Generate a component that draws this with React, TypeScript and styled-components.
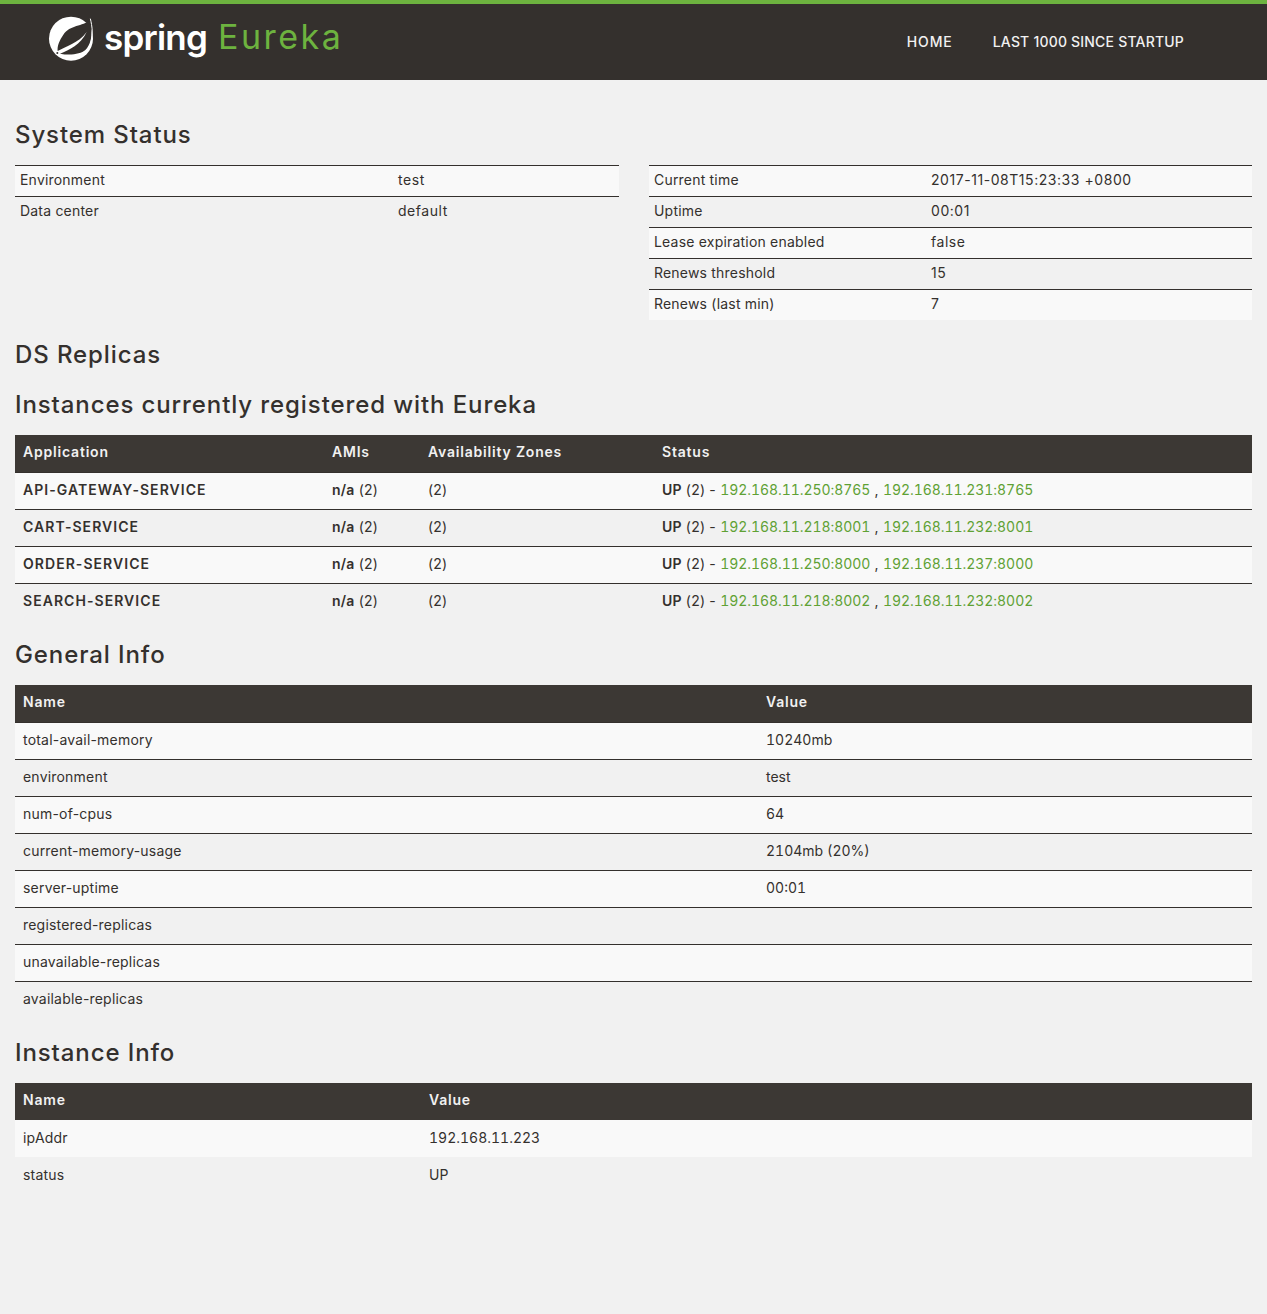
import React from 'react'
import styled, { createGlobalStyle } from 'styled-components'

const bodyFont = `'Inter', 'Open Sans', sans-serif`

const GlobalStyle = createGlobalStyle`
  html, body {
    margin: 0;
    padding: 0;
    background: #f1f1f1;
    color: #34302d;
    font-family: ${bodyFont};
  }
`

const Page = styled.div`
  min-height: 1314px;
  background: #f1f1f1;
`

const Navbar = styled.header`
  height: 76px;
  border-top: 4px solid #6db33f;
  background: #34302d;
  display: flex;
  align-items: flex-start;
  justify-content: space-between;
`

const Brand = styled.div`
  display: flex;
  align-items: flex-start;
  margin: 11px 0 0 48px;
`

const BrandSpring = styled.span`
  font-weight: 600;
  font-size: 35px;
  line-height: 46px;
  letter-spacing: -0.8px;
  color: #fff;
  margin: -1px 0 0 10px;
`

const BrandEureka = styled.span`
  font-weight: 400;
  font-size: 34px;
  line-height: 46px;
  letter-spacing: 2.5px;
  color: #6db33f;
  margin: -1px 0 0 11px;
`

const NavLinks = styled.nav`
  display: flex;
  gap: 40px;
  margin: 30px 83px 0 0;
`

const NavLink = styled.a<{ $spacing: number }>`
  font-size: 14px;
  font-weight: 500;
  line-height: 16px;
  letter-spacing: ${({ $spacing }) => $spacing}px;
  color: #f1f1f1;
`

const Container = styled.main`
  padding: 0 15px;
`

const Heading = styled.h2<{ $top: number; $bottom?: number }>`
  margin: 0;
  padding: ${({ $top, $bottom = 15 }) => `${$top}px 0 ${$bottom}px`};
  font-size: 24px;
  font-weight: 500;
  line-height: 30px;
  letter-spacing: 0.9px;
  color: #34302d;
`

const StatusRow = styled.div`
  display: grid;
  grid-template-columns: 604px 603px;
  column-gap: 30px;
  align-items: start;
`

const Table = styled.table`
  width: 100%;
  border-collapse: collapse;
  table-layout: fixed;
`

const HeadCell = styled.th<{ $plain?: boolean }>`
  height: 33px;
  padding: 0 8px 4px;
  text-align: left;
  background: #3c3834;
  border-bottom: ${({ $plain }) => ($plain ? 'none' : '1px solid #34302d')};
  color: #f1f1f1;
  font-size: 14px;
  font-weight: 600;
  letter-spacing: 0.8px;
`

const Row = styled.tr<{ $striped: boolean }>`
  background: ${({ $striped }) => ($striped ? '#f9f9f9' : 'transparent')};
`

const Cell = styled.td<{ $plain?: boolean }>`
  height: 33px;
  padding: ${({ $plain }) => ($plain ? '1px 8px 3px' : '0 8px 3px')};
  border-top: ${({ $plain }) => ($plain ? 'none' : '1px solid #34302d')};
  font-size: 14px;
  letter-spacing: 0.2px;
  color: #34302d;
  white-space: nowrap;
  tr:first-child > & {
    border-top: none;
  }
`

const StatusCell = styled.td`
  height: 27px;
  padding: 0 5px 3px;
  border-top: 1px solid #34302d;
  font-size: 14px;
  letter-spacing: 0.2px;
  color: #34302d;
  white-space: nowrap;
`

const StatusValue = styled.span`
  letter-spacing: 0.55px;
`

const AppName = styled.b`
  font-weight: 600;
  letter-spacing: 1.05px;
`

const Strong = styled.b`
  font-weight: 600;
`

const Numeric = styled.span`
  font-variant-numeric: tabular-nums;
  letter-spacing: 0;
`

const InstanceLink = styled.a`
  color: #5fa134;
  font-variant-numeric: tabular-nums;
  letter-spacing: -0.05px;
`

const SpringLeaf = () => (
  <svg width="46" height="46" viewBox="24 21 138 138" aria-hidden="true">
    <circle cx="93" cy="92" r="66" fill="#fff" />
    <path
      fill="#34302d"
      d="M150 36 C128 56 90 50 70 80 C58 97 51 115 53 129 C76 116 115 106 140 72 C122 110 88 126 60 137 C92 143 122 138 136 126 C150 112 156 90 154 66 C154 54 152 46 150 36 Z"
    />
    <path
      fill="none"
      stroke="#fff"
      strokeWidth="3"
      d="M151 32 C156 52 163 90 146 118"
    />
    <circle cx="52" cy="135" r="3" fill="#34302d" />
  </svg>
)

const leftStatus = [
  ['Environment', 'test'],
  ['Data center', 'default'],
]

const rightStatus = [
  ['Current time', '2017-11-08T15:23:33 +0800'],
  ['Uptime', '00:01'],
  ['Lease expiration enabled', 'false'],
  ['Renews threshold', '15'],
  ['Renews (last min)', '7'],
]

const apps = [
  ['API-GATEWAY-SERVICE', '192.168.11.250:8765', '192.168.11.231:8765'],
  ['CART-SERVICE', '192.168.11.218:8001', '192.168.11.232:8001'],
  ['ORDER-SERVICE', '192.168.11.250:8000', '192.168.11.237:8000'],
  ['SEARCH-SERVICE', '192.168.11.218:8002', '192.168.11.232:8002'],
]

const generalInfo = [
  ['total-avail-memory', '10240mb'],
  ['environment', 'test'],
  ['num-of-cpus', '64'],
  ['current-memory-usage', '2104mb (20%)'],
  ['server-uptime', '00:01'],
  ['registered-replicas', ''],
  ['unavailable-replicas', ''],
  ['available-replicas', ''],
]

const instanceInfo = [
  ['ipAddr', '192.168.11.223'],
  ['status', 'UP'],
]

function StatusTable({ rows, labelWidth }: { rows: string[][]; labelWidth: number }) {
  return (
    <Table>
      <colgroup>
        <col style={{ width: labelWidth }} />
        <col />
      </colgroup>
      <tbody>
        {rows.map(([name, value], i) => (
          <Row key={name} $striped={i % 2 === 0}>
            <StatusCell>{name}</StatusCell>
            <StatusCell>
              <StatusValue>{value}</StatusValue>
            </StatusCell>
          </Row>
        ))}
      </tbody>
    </Table>
  )
}

function InfoTable({ rows, nameWidth, plain }: { rows: string[][]; nameWidth: number; plain?: boolean }) {
  return (
    <Table>
      <colgroup>
        <col style={{ width: nameWidth }} />
        <col />
      </colgroup>
      <thead>
        <tr>
          <HeadCell $plain={plain}>Name</HeadCell>
          <HeadCell $plain={plain}>Value</HeadCell>
        </tr>
      </thead>
      <tbody>
        {rows.map(([name, value], i) => (
          <Row key={name} $striped={i % 2 === 0}>
            <Cell $plain={plain}>{name}</Cell>
            <Cell $plain={plain}>
              <Numeric>{value}</Numeric>
            </Cell>
          </Row>
        ))}
      </tbody>
    </Table>
  )
}

export default function App() {
  return (
    <Page>
      <GlobalStyle />
      <Navbar>
        <Brand>
          <SpringLeaf />
          <BrandSpring>spring</BrandSpring>
          <BrandEureka>Eureka</BrandEureka>
        </Brand>
        <NavLinks>
          <NavLink $spacing={0.9}>HOME</NavLink>
          <NavLink $spacing={0.2}>LAST 1000 SINCE STARTUP</NavLink>
        </NavLinks>
      </Navbar>
      <Container>
        <Heading $top={40}>System Status</Heading>
        <StatusRow>
          <StatusTable rows={leftStatus} labelWidth={378} />
          <StatusTable rows={rightStatus} labelWidth={277} />
        </StatusRow>
        <Heading $top={20} $bottom={20}>DS Replicas</Heading>
        <Heading $top={0}>Instances currently registered with Eureka</Heading>
        <Table>
          <colgroup>
            <col style={{ width: 309 }} />
            <col style={{ width: 96 }} />
            <col style={{ width: 234 }} />
            <col />
          </colgroup>
          <thead>
            <tr>
              <HeadCell>Application</HeadCell>
              <HeadCell>AMIs</HeadCell>
              <HeadCell>Availability Zones</HeadCell>
              <HeadCell>Status</HeadCell>
            </tr>
          </thead>
          <tbody>
            {apps.map(([name, first, second], i) => (
              <Row key={name} $striped={i % 2 === 0}>
                <Cell>
                  <AppName>{name}</AppName>
                </Cell>
                <Cell>
                  <Strong>n/a</Strong> (2)
                </Cell>
                <Cell>(2)</Cell>
                <Cell>
                  <Strong>UP</Strong> (2) - <InstanceLink>{first}</InstanceLink> , <InstanceLink>{second}</InstanceLink>
                </Cell>
              </Row>
            ))}
          </tbody>
        </Table>
        <Heading $top={20}>General Info</Heading>
        <InfoTable rows={generalInfo} nameWidth={743} />
        <Heading $top={20}>Instance Info</Heading>
        <InfoTable rows={instanceInfo} nameWidth={406} plain />
      </Container>
    </Page>
  )
}
